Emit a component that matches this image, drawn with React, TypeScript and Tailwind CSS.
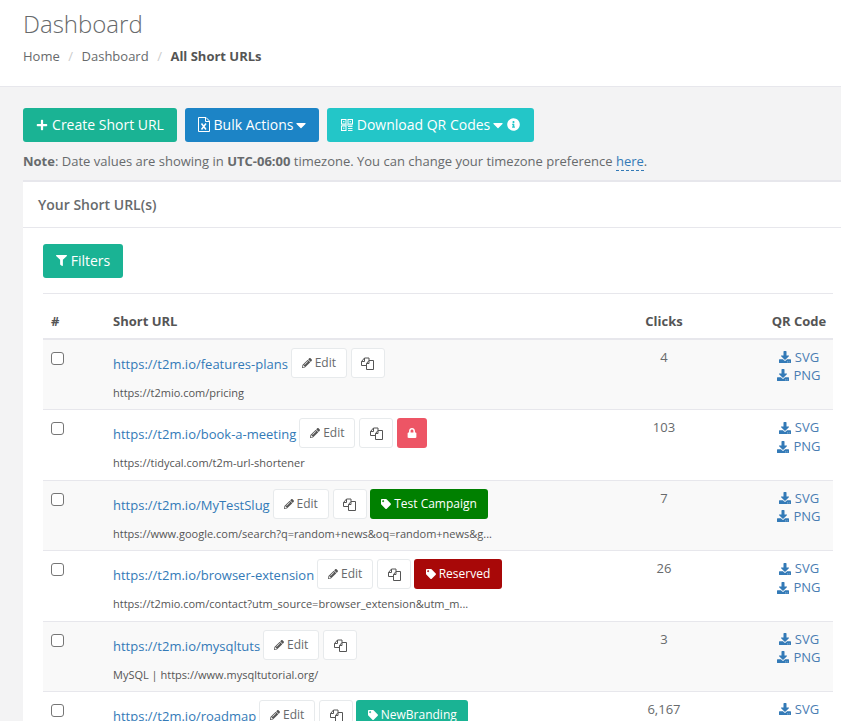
import React from "react";
import { FaPlus, FaDownload, FaPencilAlt, FaTag, FaLock, FaFilter, FaInfoCircle, FaCaretDown } from "react-icons/fa";

const QrIcon = () => (
  <svg width="12" height="12" viewBox="0 0 12 12" fill="none" stroke="currentColor" strokeWidth="1">
    <rect x="0.5" y="0.5" width="4.5" height="4.5" />
    <rect x="7" y="0.5" width="4.5" height="4.5" />
    <rect x="0.5" y="7" width="4.5" height="4.5" />
    <path d="M2 2.7h1.5M8.5 2.7H10M2 9.2h1.5" />
    <path d="M0.5 6h11M7 7.5h4.5M7 9.5h4.5M7 11.5h4.5" strokeWidth="0.9" />
  </svg>
);

const XlsIcon = () => (
  <svg width="12" height="15" viewBox="0 0 12 15" fill="none" stroke="currentColor">
    <path d="M0.5 0.5H8L11.5 4V14.5H0.5Z" strokeWidth="1" />
    <path d="M7.5 0.5V4.5H11.5" strokeWidth="1" />
    <path d="M3.5 6.5L8 12.5M8 6.5L3.5 12.5" strokeWidth="1.5" />
  </svg>
);

const CopyIcon = () => (
  <svg width="13" height="13" viewBox="0 0 13 13" fill="none" stroke="currentColor" strokeWidth="1">
    <path d="M5.5 8.5H0.5V4.5L3.5 1H8V3.5" />
    <path d="M0.5 4.5H3.5V1" />
    <path d="M5.5 6.5L8 3.5H12.5V12.5H5.5Z" />
    <path d="M5.5 6.5H8V3.5" />
  </svg>
);

type Row = {
  url: string;
  dest: string;
  clicks: string;
  tag?: { label: string; cls: string };
  lock?: boolean;
  tall: boolean;
  striped: boolean;
  single?: boolean;
};

const rows: Row[] = [
  { url: "https://t2m.io/features-plans", dest: "https://t2mio.com/pricing", clicks: "4", tall: false, striped: true },
  { url: "https://t2m.io/book-a-meeting", dest: "https://tidycal.com/t2m-url-shortener", clicks: "103", lock: true, tall: true, striped: false },
  { url: "https://t2m.io/MyTestSlug", dest: "https://www.google.com/search?q=random+news&oq=random+news&g...", clicks: "7", tag: { label: "Test Campaign", cls: "bg-[#008000]" }, tall: false, striped: true },
  { url: "https://t2m.io/browser-extension", dest: "https://t2mio.com/contact?utm_source=browser_extension&utm_m...", clicks: "26", tag: { label: "Reserved", cls: "bg-[#a80808]" }, tall: true, striped: false },
  { url: "https://t2m.io/mysqltuts", dest: "MySQL | https://www.mysqltutorial.org/", clicks: "3", tall: false, striped: true },
  { url: "https://t2m.io/roadmap", dest: "", clicks: "6,167", tag: { label: "NewBranding", cls: "bg-[#1ab394]" }, tall: false, striped: false, single: true },
];

function TableRow({ r }: { r: Row }) {
  return (
    <div className={`flex border-b border-[#e7e7ec] ${r.tall ? "h-[71px]" : "h-[70px]"} ${r.striped ? "bg-[#f9f9f9]" : "bg-white"}`}>
      <div className="w-[62px] shrink-0 pl-2 pt-[12px]">
        <div className="h-[13px] w-[13px] rounded-[3px] border border-[#767676] bg-white" />
      </div>
      <div className="w-[515px] shrink-0 pl-2 pt-[8px]">
        <div className="flex h-[30px] items-center">
          <a className="translate-y-[1px] text-[13px] leading-[20px] whitespace-nowrap text-[#337ab7]">{r.url}</a>
          <button className="ml-[3px] flex h-[30px] w-[56px] items-center justify-center gap-[3px] rounded-[3px] border border-[#e7eaec] bg-white pb-[1px] text-[12px] text-[#676a6c]">
            <FaPencilAlt className="text-[10px] text-[#555]" />
            Edit
          </button>
          <button className="ml-1 flex h-[30px] w-[34px] items-center justify-center rounded-[3px] border border-[#e7eaec] bg-white text-[#555]">
            <CopyIcon />
          </button>
          {r.lock && (
            <span className="ml-1 flex h-[30px] w-[30px] items-center justify-center rounded-[3px] bg-[#ed5565] text-[10px] text-white">
              <FaLock />
            </span>
          )}
          {r.tag && (
            <span className={`ml-[3px] flex h-[30px] items-center gap-[3px] rounded-[3px] px-[11.5px] pb-[1px] text-[12px] text-white ${r.tag.cls}`}>
              <FaTag className="text-[10px]" />
              {r.tag.label}
            </span>
          )}
        </div>
        <div className="mt-[8px] text-[11px] leading-[14px] whitespace-nowrap text-[#555]">{r.dest}</div>
      </div>
      <div className="w-[88px] shrink-0 pt-[7px] text-center text-[13px] leading-[20px] text-[#676a6c]">{r.clicks}</div>
      <div className="w-[56px] shrink-0" />
      <div className={`w-[70px] shrink-0 pt-[8px] text-center text-[13px] text-[#4a7db3] ${r.tall ? "leading-[19px]" : "leading-[18px]"}`}>
        <div className="flex items-center justify-center gap-1">
          <FaDownload className="text-[12px] text-[#337ab7]" />
          SVG
        </div>
        {!r.single && (
          <div className="flex items-center justify-center gap-1">
            <FaDownload className="text-[12px] text-[#337ab7]" />
            PNG
          </div>
        )}
      </div>
    </div>
  );
}

export default function App() {
  return (
    <div className="h-[721px] w-[841px] overflow-hidden bg-[#f3f3f4] font-['Open_Sans',sans-serif] text-[13px] text-[#676a6c]">
      <header className="h-[87px] border-b border-[#e7e7ec] bg-white px-[23px] pt-[8px]">
        <h2 className="text-[24px] leading-[32px] font-light text-[#676a6c]">Dashboard</h2>
        <nav className="mt-[7px] flex items-center text-[13px] leading-[18px] text-[#676a6c]">
          <span>Home</span>
          <span className="mx-[8.5px] text-[#ccc]">/</span>
          <span>Dashboard</span>
          <span className="mx-[8.5px] text-[#ccc]">/</span>
          <strong className="font-bold text-[#555]">All Short URLs</strong>
        </nav>
      </header>
      <main className="pt-[21px] pl-[23px]">
        <div className="flex gap-2">
          <button className="flex h-[34px] w-[154px] items-center justify-center gap-[4px] rounded-[3px] bg-[#1ab394] pb-[1px] text-[14px] text-white">
            <FaPlus className="text-[12px]" />
            Create Short URL
          </button>
          <button className="flex h-[34px] w-[134px] items-center justify-center gap-[4px] rounded-[3px] bg-[#1c84c6] pb-[1px] text-[14px] text-white">
            <XlsIcon />
            Bulk Actions
            <FaCaretDown className="-ml-[1px] h-[16px] w-[10px]" />
          </button>
          <button className="flex h-[34px] w-[207px] items-center justify-center gap-[4px] rounded-[3px] bg-[#23c6c8] pb-[1px] text-[14px] text-white">
            <QrIcon />
            Download QR Codes
            <FaCaretDown className="-ml-[1px] h-[16px] w-[10px]" />
            <FaInfoCircle className="text-[13px]" />
          </button>
        </div>
        <p className="mt-[9px] text-[13px] leading-[20px] whitespace-nowrap text-[#676a6c]">
          <strong className="font-bold">Note</strong>: Date values are showing in <strong className="font-bold">UTC-06:00</strong> timezone. You can change your timezone preference{" "}
          <a className="border-b border-dashed border-[#337ab7] text-[#337ab7]">here</a>.
        </p>
        <section className="mt-[9px] w-[830px] border-t-2 border-[#e7e7ec] bg-white">
          <div className="flex h-[46px] items-center border-b border-[#e7e7ec] pl-[15px] text-[14px] font-semibold text-[#676a6c]">Your Short URL(s)</div>
          <div className="px-5 pt-[16px]">
            <button className="flex h-[34px] w-[80px] items-center justify-center gap-[4px] rounded-[3px] bg-[#1ab394] pb-[1px] text-[14px] text-white">
              <FaFilter className="text-[11px]" />
              Filters
            </button>
            <div className="mt-[15px] border-t border-[#e7e7ec]" />
            <div className="flex h-[46px] items-center border-b-2 border-[#e7e7ec] pt-[11px] text-[13px] font-bold text-[#555]">
              <div className="w-[62px] shrink-0 pl-2">#</div>
              <div className="w-[515px] shrink-0 pl-2">Short URL</div>
              <div className="w-[88px] shrink-0 text-center">Clicks</div>
              <div className="w-[56px] shrink-0" />
              <div className="w-[70px] shrink-0 text-center whitespace-nowrap">QR Code</div>
            </div>
            {rows.map((r) => (
              <TableRow key={r.url} r={r} />
            ))}
          </div>
        </section>
      </main>
    </div>
  );
}
